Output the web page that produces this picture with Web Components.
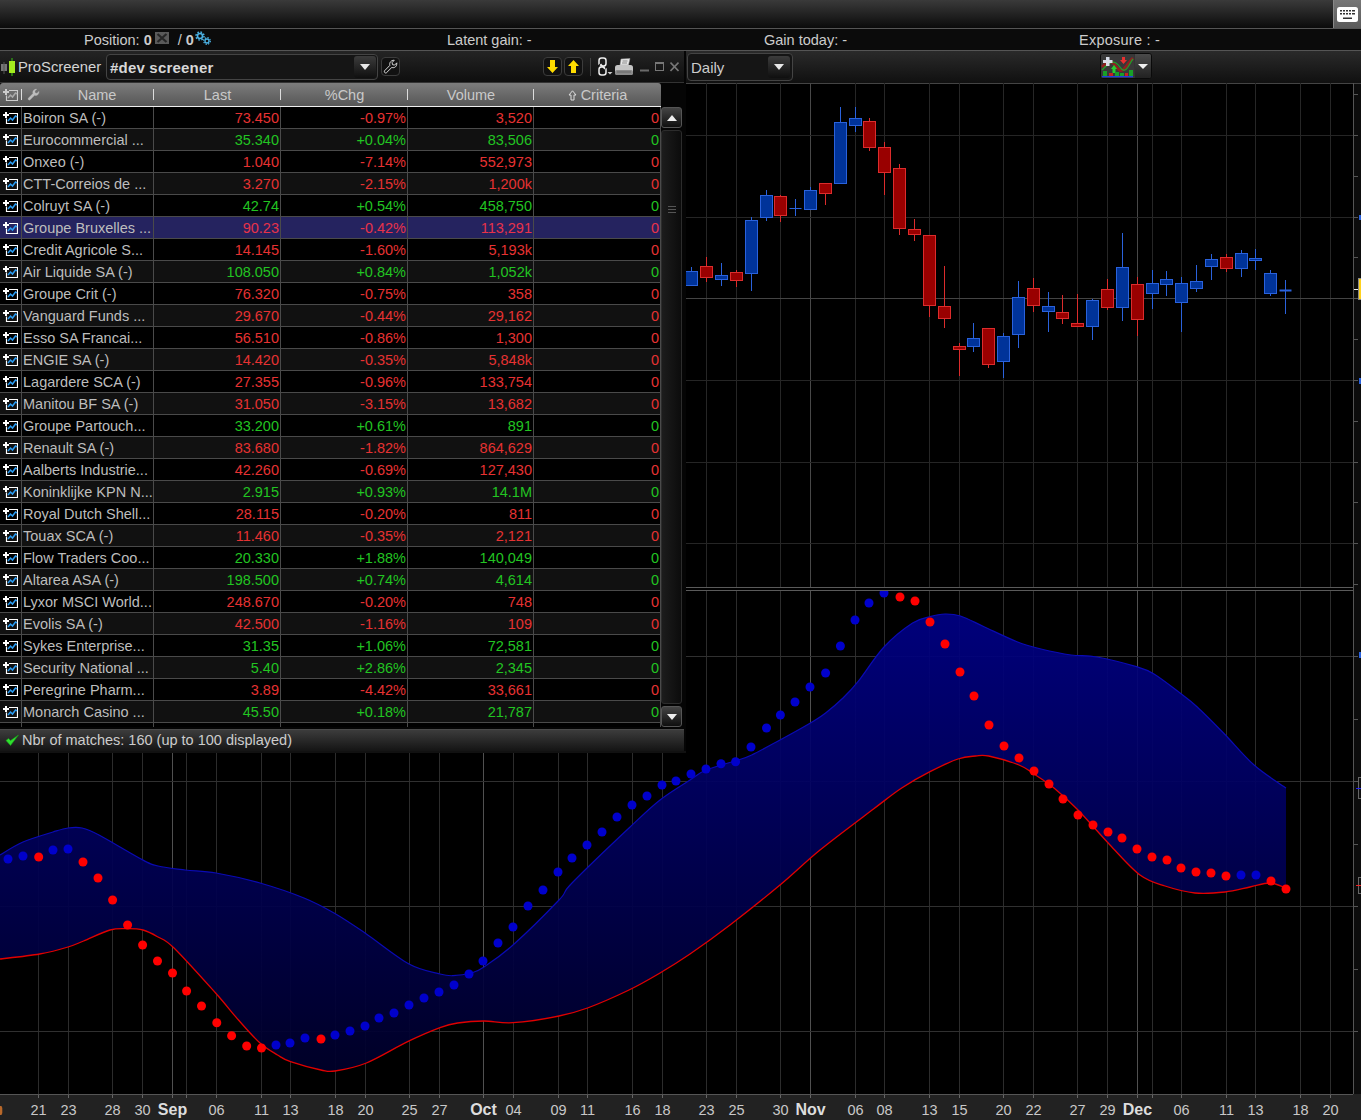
<![CDATA[<!DOCTYPE html>
<html lang="en"><head><meta charset="utf-8"><title>ProScreener</title>
<style>
html,body{margin:0;padding:0;background:#000;width:1361px;height:1120px;overflow:hidden}
body{display:flex;flex-direction:column;position:relative;font:14.5px "Liberation Sans",Arial,sans-serif;color:#ccc}
</style>
<script>
const rowIcon=(b,c)=>`<svg width="15" height="12" viewBox="0 0 15 12" style="display:block"><path d="M3 0v6M0 3h6" stroke="${b}" stroke-width="2" fill="none"/><path d="M6 1.500h8.500v10h-11v-5" stroke="${b}" stroke-width="1.200" fill="none"/><path d="M5 9l2.500-3 2 2 3-4 1.500 1" stroke="${c}" stroke-width="1.500" fill="none"/></svg>`;
const wrench=(s,c,o)=>`<svg width="${s}" height="${s}" viewBox="0 0 16 16" style="display:block"><path d="M1.500 12.700L7.300 6.800C6.500 4 8.500 1.200 12 1.300L9.700 3.800l.4 2.200 2.200.5 2.400-2.400C15 8 12.300 10 9.400 9L3.500 14.800c-1.300.6-2.500-.8-2-2.100z" fill="${o?'none':c}" stroke="${c}" stroke-width="${o?1:.4}" stroke-linejoin="round"/></svg>`;

class PrCaret extends HTMLElement{constructor(){super();this.attachShadow({mode:'open'}).innerHTML=`<style>
:host{display:flex;align-items:center;justify-content:center;width:22px;height:22px;border-radius:3px;background:linear-gradient(#3c3c3c,#0f0f0f);box-sizing:border-box;flex:none}
i{display:block;width:0;height:0;border:5.500px solid transparent;border-top:6px solid #e8e8e8;border-bottom:0}
</style><i></i>`}}
customElements.define('pr-caret',PrCaret);

class PrTopbar extends HTMLElement{constructor(){super();this.attachShadow({mode:'open'}).innerHTML=`<style>
:host{display:flex;justify-content:flex-end;height:28px;flex:none;background:linear-gradient(#3a3a3a,#0b0b0b);border-bottom:1px solid #555}
.k{width:28px;display:flex;align-items:center;justify-content:center;background:linear-gradient(#777,#5a5a5a);border-left:1px solid #888;box-sizing:border-box}
</style><div class="k"><svg width="21" height="15" viewBox="0 0 21 15"><rect width="21" height="15" rx="2.500" fill="#fff"/><g fill="#333"><path d="M3 3h2v1.500H3zM6 3h2v1.500H6zM9 3h2v1.500H9zM12 3h2v1.500h-2zM15 3h3v1.500h-3zM3 6h2v1.500H3zM6 6h2v1.500H6zM9 6h2v1.500H9zM12 6h2v1.500h-2zM15 6h3v1.500h-3zM6 10.500h9V12H6z"/></g></svg></div>`}}
customElements.define('pr-topbar',PrTopbar);

class PrStatus extends HTMLElement{constructor(){super();this.attachShadow({mode:'open'}).innerHTML=`<style>
:host{display:grid;grid-template-columns:447px 317px 315px 1fr;height:21px;flex:none;align-items:start;background:#0b0b0b;border-bottom:1px solid #555;color:#ccc;font-size:14.500px;line-height:23px}
</style><slot></slot>`}}
customElements.define('pr-status',PrStatus);
class PrStat extends HTMLElement{constructor(){super();this.attachShadow({mode:'open'}).innerHTML=`<style>
:host{display:block;height:21px;white-space:nowrap;padding-left:var(--pad,0)}
</style><slot></slot>`}}
customElements.define('pr-stat',PrStat);

class PrToolbar extends HTMLElement{constructor(){super();this.attachShadow({mode:'open'}).innerHTML=`<style>
:host{display:flex;align-items:flex-start;height:30px;padding:2px 0 0 687px;flex:none;background:linear-gradient(#2a2a2a,#101010)}
.sel{display:flex;align-items:center;justify-content:space-between;width:106px;height:28px;box-sizing:border-box;border:1px solid #444;border-radius:4px;background:#151515;padding:0 2px 0 3px;color:#ccc;font-size:15px}
.ind{display:flex;margin-left:307px;height:26px;border-radius:3px;overflow:hidden;background:#333;border:1px solid #0a0a0a;box-sizing:border-box}
.ind svg{display:block}.ar{width:16px;margin-left:1px;display:flex;align-items:center;justify-content:center;background:linear-gradient(#4a4a4a,#222)}
.ar i{width:0;height:0;border:5px solid transparent;border-top:5px solid #eee;border-bottom:0}
</style><div class="sel">Daily<pr-caret></pr-caret></div>
<div class="ind"><svg width="33" height="24" viewBox="0 0 33 24"><rect width="33" height="24" fill="#383838"/>
<path d="M1 13C6 8 10 6 14 11s6 8 10 3 5-7 8-10" stroke="#8e2020" stroke-width="3" fill="none"/>
<path d="M1 16C6 11 10 6 15 9s5 9 9 7 5-8 8-11" stroke="#1f9d2a" stroke-width="1.300" fill="none"/>
<path d="M2 6h3V3h3.500v3h3v3h-3v3H5V9H2z" fill="#d8dde8"/>
<path d="M21 3h3v3h2l-3.500 4L19 6h2z" fill="#e83030"/><path d="M11.500 19v-4H10l3-4 3 4h-1.500v4z" fill="#28d030"/>
<g><rect x="2" y="17" width="4" height="5" fill="#18a028"/><rect x="8" y="19" width="4" height="3" fill="#c82020"/><rect x="14" y="18" width="4" height="4" fill="#18a028"/><rect x="19" y="19" width="4" height="3" fill="#18a028"/><rect x="24" y="19" width="3" height="3" fill="#c82020"/><rect x="28" y="16" width="4" height="6" fill="#18a028"/></g>
<rect x="1" y="22" width="31" height="1.300" fill="#2040e0"/></svg><div class="ar"><i></i></div></div>`}}
customElements.define('pr-toolbar',PrToolbar);

class PrChart extends HTMLElement{constructor(){super();
 const H=1037,o=83,Y=y=>y-o;
 const ticks=[[38,'21'],[68,'23'],[112,'28'],[142,'30'],[172,'Sep',1],[186,''],[216,'06'],[261,'11'],[290,'13'],[335,'18'],[365,'20'],[409,'25'],[439,'27'],[483,'Oct',1],[513,'04'],[558,'09'],[587,'11'],[632,'16'],[662,'18'],[706,'23'],[736,'25'],[780,'30'],[810,'Nov',1],[855,'06'],[884,'08'],[929,'13'],[959,'15'],[1003,'20'],[1033,'22'],[1077,'27'],[1107,'29'],[1137,'Dec',1],[1152,''],[1181,'06'],[1226,'11'],[1255,'13'],[1300,'18'],[1330,'20']];
 const C=[['b',691.5,271,285,267,285],['r',706.5,266,277,257,282],['b',721.5,275,279,263,286],['r',736.5,272,280,270,287],['b',751.5,220,273,217,291],['b',766.5,195,217,190,221],['r',780.5,196,215,195,222],['b',795.5,208,208,199,216],['b',810.5,190,209,187,209],['r',825.5,183,193,183,205],['b',840.5,122,183,107,183],['b',855.5,118,125,107,132],['r',869.5,121,147,118,151],['r',884.5,147,172,142,195],['r',899.5,168,228,164,235],['r',914.5,229,234,219,241],['r',929.5,235,305,235,317],['r',944.5,306,318,266,328],['r',959.5,346,349,343,376],['b',973.5,338,346,323,352],['r',988.5,328,364,328,368],['b',1003.5,336,361,333,378],['b',1018.5,297,334,281,348],['r',1033.5,288,305,278,312],['b',1048.5,306,311,292,332],['r',1062.5,312,318,295,324],['r',1077.5,323,326,294,327],['b',1092.5,300,326,299,340],['r',1107.5,289,307,279,310],['b',1122.5,267,307,233,321],['r',1137.5,284,319,277,336],['b',1152.5,283,293,270,309],['b',1166.5,279,284,271,296],['b',1181.5,283,302,277,332],['b',1196.5,281,288,265,292],['b',1211.5,259,266,254,280],['r',1226.5,257,268,254,272],['b',1241.5,253,268,250,277],['b',1255.5,258,260,249,270],['b',1270.5,273,293,270,296],['b',1285.5,290,290,280,314]];
 const up=[[0,855],[23,842],[53,832],[68,828],[82,828],[99,835],[141,859],[158,866],[185,870],[216,873],[260,883],[304,898],[334,913],[365,933],[409,964],[440,974],[453,975.7],[471,973],[484,967],[513,945],[559,900],[572,883],[629,828],[660,800],[690,780],[706,770],[735.6,760.7],[751.7,755],[780,740],[810.4,723],[825.6,713],[843,698],[858,681.700],[884,647],[912.600,623],[930,616.7],[945,614],[960.4,616],[984,626.7],[1017,641.7],[1041,649],[1071,655],[1097,657],[1136.5,666.7],[1154,674],[1180,693],[1197,706.7],[1223.5,733],[1254,765],[1286,788]];
 const lo=[[0,959],[39.6,954],[68,947],[83.6,941],[110,930],[127.6,928.7],[143,930],[157.5,936.7],[174,948],[215.6,993],[238.5,1020],[260,1043],[277.5,1055],[290.5,1061.7],[321,1070],[335,1071],[366.4,1063],[407.6,1041.7],[440,1027.7],[457.6,1023],[484,1021],[513,1022.7],[559,1016],[587.5,1008],[629,990],[660,973],[690,954],[730,925],[780,885],[820,850],[873.5,809],[901.7,788],[930,771.7],[958,759],[975.6,756],[988.7,756],[1019,765],[1034,774],[1054,788],[1078,810],[1110,845],[1140,875],[1165,886],[1195,893],[1225,892],[1250,887],[1270,883],[1286,888]];
 const db=[[8,859],[23,856],[53,850],[68,849],[276,1045],[290,1043],[305,1038],[335,1035],[350,1031],[365,1026],[379,1018],[394,1013],[409,1005],[424,998],[439,992],[454,985],[469,974],[483,961],[498,943],[513,927],[528,906],[543,890],[558,872],[572,858],[587,845],[602,832],[617,817],[632,805],[647,796],[662,785],[676,781],[691,774],[706,769],[721,763.7],[735.6,761.7],[751,747],[766.5,728],[780.4,715],[795,702],[810,687],[825.6,673],[840.4,646],[855,620],[869,603],[884,593],[1241,875],[1256,875]];
 const dr=[[38.7,857],[83,862],[98,878],[112.6,900],[127.6,925],[142.6,945],[157.5,961],[172.5,973],[186.6,991],[201.500,1006],[216.8,1022.7],[231.6,1035.7],[246.7,1046],[261.5,1048],[321,1039],[900,597],[915,601],[930,622],[945,644],[960,672],[974,696],[989,725],[1004,746],[1019,758],[1034,771],[1049,784],[1063,799],[1078,815],[1093,825],[1108,832],[1122,838],[1137,849],[1152,857],[1167,860],[1181,868],[1196,872],[1211,873],[1226,876],[1271,881],[1286,889]];
 const smooth=(p,start=true)=>{let d=(start?'M':'L')+p[0][0]+' '+Y(p[0][1]);for(let i=0;i<p.length-1;i++){const a=p[i-1]||p[i],b=p[i],c=p[i+1],e=p[i+2]||c;d+=`C${(b[0]+(c[0]-a[0])/6).toFixed(1)} ${(Y(b[1])+(c[1]-a[1])/6).toFixed(1)} ${(c[0]-(e[0]-b[0])/6).toFixed(1)} ${(Y(c[1])-(e[1]-b[1])/6).toFixed(1)} ${c[0]} ${Y(c[1])}`}return d};
 let g='';
 for(const [x,,m] of ticks){const c=m?'#484848':'#262626',c2=m?'#505050':'#2c2c2c';
  g+=`<path d="M${x+.5} 0V${Y(587)}" stroke="${c}"/><path d="M${x+.5} ${Y(591)}V${Y(1094)}" stroke="${c2}"/>`}
 for(const y of [135,217,298,380,462,543])g+=`<path d="M0 ${y+.5-o}H1353" stroke="${y==298?'#444':'#252525'}"/>`;
 for(const y of [656,781,906,1031])g+=`<path d="M0 ${y+.5-o}H1353" stroke="#303030"/>`;
 let cs='';
 for(const [k,x,t,b,w1,w2] of C){const s=k=='b'?'#2a62dc':'#dc2c2c',f=k=='b'?'#003399':'#990000';
  cs+=`<path d="M${x} ${Y(w1)}V${Y(w2)}" stroke="${s}"/>`;
  cs+=t==b?`<path d="M${x-6} ${Y(t)+.5}h12" stroke="${s}" stroke-width="${x>1280?2:1}"/>`:`<rect x="${x-6}" y="${Y(t)+.5}" width="12" height="${b-t}" fill="${f}" stroke="${s}"/>`}
 let ax='';
 for(const y of [94,135,176,217,257,298,339,380,421,462,502,543,584,656,719,781,844,906,969,1031])ax+=`<path d="M1354 ${y+.5-o}h4" stroke="#555"/>`;
 ax+=`<path d="M1360 ${215-o}v5M1360 ${378-o}v6M1360 ${652-o}v6" stroke="#2a62dc" stroke-width="2"/>`;
 ax+=`<rect x="1358.500" y="${278.5-o}" width="4" height="21" fill="#ffd21e" stroke="#888"/><path d="M1354 ${289.5-o}h4" stroke="#eee"/>`;
 ax+=`<rect x="1358.500" y="${777.5-o}" width="4" height="21" fill="#111" stroke="#666"/><path d="M1356 ${788.5-o}h5" stroke="#22e"/>`;
 ax+=`<rect x="1358.500" y="${877.5-o}" width="4" height="16" fill="#111" stroke="#666"/><path d="M1356 ${885.5-o}h5" stroke="#e22"/>`;
 let tx='';
 for(const [x,l,m] of ticks)if(l)tx+=`<text x="${x+.5}" y="${1115-o}" text-anchor="middle" font-size="${m?16:14.5}" font-weight="${m?700:400}" fill="${m?'#ddd':'#c8c8c8'}">${l}</text>`;
 const lower=[...lo].reverse();
 const band=smooth(up)+`L1286 ${Y(888)}`+smooth(lower,false)+'Z';
 const dots=(a,c)=>a.map(([x,y])=>`<circle cx="${x}" cy="${Y(y)}" r="4.500" fill="${c}"/>`).join('');
 this.attachShadow({mode:'open'}).innerHTML=`<style>:host{display:block;height:${H}px;flex:none;background:#000}svg{display:block;font-family:"Liberation Sans",Arial,sans-serif}</style>
 <svg width="1361" height="${H}" viewBox="0 0 1361 ${H}">
 <defs><clipPath id="lp"><rect x="0" y="${Y(591)}" width="1353" height="503"/></clipPath>
 <linearGradient id="bg" gradientUnits="userSpaceOnUse" x1="0" x2="0" y1="${Y(614)}" y2="${Y(1070)}"><stop offset="0" stop-color="#000084"/><stop offset="1" stop-color="#00002a"/></linearGradient></defs>
 <path d="M1354 0H1361V${Y(1094)}H1354z" fill="#0c0c0c"/>
 <rect x="0" y="0" width="1361" height="1" fill="#444"/>
 ${g}
 ${cs}
 <path d="M0 ${Y(587)+.5}H1353M0 ${Y(590)+.5}H1353" stroke="#5a5a5a"/>
 <path d="M1353.500 0V${Y(1094)}" stroke="#555"/>
 ${ax}
 <g clip-path="url(#lp)"><path d="${band}" fill="url(#bg)" fill-opacity=".93"/>
 <path d="${smooth(up)}" fill="none" stroke="#0a0ab4" stroke-width="1.200"/>
 <path d="${smooth(lo)}" fill="none" stroke="#e00000" stroke-width="1.300"/>
 ${dots(db,'#0000cc')}${dots(dr,'#ff0000')}</g>
 <rect x="0" y="${Y(1094)}" width="1361" height="26" fill="#222"/>
 <path d="M0 ${Y(1094)+.5}H1353" stroke="#555"/>
 ${ticks.map(([x])=>`<path d="M${x+.5} ${Y(1095)}v3" stroke="#666"/>`).join('')}
 <path d="M0 ${1106-o}h1.500l.8 2v5l-.8 2H0z" fill="#b8682a"/>
 ${tx}
 </svg>`}}
customElements.define('pr-chart',PrChart);

const COLS='22px 132px 127px 127px 126px 127px';
class ScRow extends HTMLElement{constructor(){super();this.attachShadow({mode:'open'})}
 connectedCallback(){const d=this.dataset;this.shadowRoot.innerHTML=`<style>
 :host{display:grid;grid-template-columns:${COLS};height:22px;box-sizing:border-box;border-bottom:1px solid #4a4a4a;background:${d.sel?'#25235f':d.alt?'#111':'#000'};font-size:14.500px;line-height:23px;color:${d.t=='g'?'#22c422':(d.sel?'#e8324a':'#e63232')};white-space:nowrap}
 div{border-right:1px solid #4a4a4a;text-align:right;padding-right:1px;overflow:hidden;height:21px}
 .i{padding:5px 0 0 3px;box-sizing:border-box;text-align:left}
 .n{text-align:left;padding-left:1px;color:#bdbdbd}
 </style><div class="i">${rowIcon('#fff','#2a9df4')}</div><div class="n">${d.n}</div><div>${d.l}</div><div>${d.c}</div><div>${d.v}</div><div>0</div>`}}
customElements.define('sc-row',ScRow);

class ScHeader extends HTMLElement{constructor(){super();this.attachShadow({mode:'open'}).innerHTML=`<style>
 :host{display:grid;grid-template-columns:${COLS};height:24px;box-sizing:border-box;border-bottom:1px solid #eee;background:linear-gradient(#7c7c7c,#565656);border-radius:3px 3px 0 0;color:#c9c9c9;font-size:14.500px;line-height:24px;text-align:center}
 div{position:relative;display:flex;align-items:center;justify-content:center;gap:4px}
 div::after{content:"";position:absolute;right:0;top:6px;height:11px;border-right:1px solid #ddd}
 div:last-child::after{display:none}
 .i{padding:0 0 0 3px;justify-content:flex-start}
 .n{padding-left:18px;box-sizing:border-box}
 .w{position:absolute;left:5px;top:5px}
 </style><div class="i">${rowIcon('#ccc','#aaa')}</div><div class="n"><span class="w">${wrench(13,'#bdbdbd')}</span>Name</div><div>Last</div><div>%Chg</div><div>Volume</div><div><svg width="9" height="11" viewBox="0 0 9 11"><path d="M4.500 .8L8 5H6v5H3V5H1z" fill="none" stroke="#ddd"/></svg>Criteria</div>`}}
customElements.define('sc-header',ScHeader);

class ScScroll extends HTMLElement{constructor(){super();this.attachShadow({mode:'open'}).innerHTML=`<style>
 :host{display:flex;flex-direction:column;width:21px;margin:24px 2px 0 0;height:620px;flex:none;gap:2px}
 .b{height:21px;box-sizing:border-box;border:1px solid #555;border-radius:3px;background:linear-gradient(#444,#0f0f0f);display:flex;align-items:center;justify-content:center;flex:none}
 .u{border-left:5.500px solid transparent;border-right:5.500px solid transparent;border-bottom:6px solid #eee}
 .d{border-left:5px solid transparent;border-right:5px solid transparent;border-top:6px solid #eee}
 .t{flex:1;box-sizing:border-box;border:1px solid #2c2c2c;border-radius:3px;background:linear-gradient(90deg,#1c1c1c,#0c0c0c);padding-top:75px;display:flex;justify-content:center}
 .g{width:8px;height:5px;border-top:1px solid #555;border-bottom:1px solid #555;position:relative}
 .g::after{content:"";position:absolute;left:0;right:0;top:2px;border-top:1px solid #555}
 </style><div class="b"><i class="u"></i></div><div class="t"><div class="g"></div></div><div class="b"><i class="d"></i></div>`}}
customElements.define('sc-scroll',ScScroll);

class ScBtn extends HTMLElement{constructor(){super();this.attachShadow({mode:'open'}).innerHTML=`<style>
 :host{display:flex;align-items:center;justify-content:center;width:19px;height:19px;box-sizing:border-box;border:1px solid #3c3c3c;border-radius:4px;background:#111;flex:none}
 </style><slot></slot>`}}
customElements.define('sc-btn',ScBtn);

class PrScreener extends HTMLElement{constructor(){super();
 const D=`Boiron SA (-)|73.450|-0.97%|3,520|r
Eurocommercial ...|35.340|+0.04%|83,506|g
Onxeo (-)|1.040|-7.14%|552,973|r
CTT-Correios de ...|3.270|-2.15%|1,200k|r
Colruyt SA (-)|42.74|+0.54%|458,750|g
Groupe Bruxelles ...|90.23|-0.42%|113,291|r
Credit Agricole S...|14.145|-1.60%|5,193k|r
Air Liquide SA (-)|108.050|+0.84%|1,052k|g
Groupe Crit (-)|76.320|-0.75%|358|r
Vanguard Funds ...|29.670|-0.44%|29,162|r
Esso SA Francai...|56.510|-0.86%|1,300|r
ENGIE SA (-)|14.420|-0.35%|5,848k|r
Lagardere SCA (-)|27.355|-0.96%|133,754|r
Manitou BF SA (-)|31.050|-3.15%|13,682|r
Groupe Partouch...|33.200|+0.61%|891|g
Renault SA (-)|83.680|-1.82%|864,629|r
Aalberts Industrie...|42.260|-0.69%|127,430|r
Koninklijke KPN N...|2.915|+0.93%|14.1M|g
Royal Dutch Shell...|28.115|-0.20%|811|r
Touax SCA (-)|11.460|-0.35%|2,121|r
Flow Traders Coo...|20.330|+1.88%|140,049|g
Altarea ASA (-)|198.500|+0.74%|4,614|g
Lyxor MSCI World...|248.670|-0.20%|748|r
Evolis SA (-)|42.500|-1.16%|109|r
Sykes Enterprise...|31.35|+1.06%|72,581|g
Security National ...|5.40|+2.86%|2,345|g
Peregrine Pharm...|3.89|-4.42%|33,661|r
Monarch Casino ...|45.50|+0.18%|21,787|g`.split('\n').map(s=>s.split('|'));
 const rows=D.map((r,i)=>`<sc-row data-n="${r[0]}" data-l="${r[1]}" data-c="${r[2]}" data-v="${r[3]}" data-t="${r[4]}"${i&1?' data-alt="1"':''}${i==5?' data-sel="1"':''}></sc-row>`).join('');
 this.attachShadow({mode:'open'}).innerHTML=`<style>
 :host{position:absolute;left:0;top:51px;width:686px;height:702px;padding-right:2px;display:flex;flex-direction:column;background:#050505;color:#ccc;font-size:14.500px;box-sizing:border-box;border-bottom:2px solid #111}
 .title{display:flex;align-items:center;height:31px;flex:none;background:linear-gradient(#242424,#0e0e0e);border-bottom:1px solid #333}
 .logo{margin-left:1px;flex:none;display:block}
 .name{margin-left:1px;width:88px;flex:none;font-size:14.800px;line-height:17px;padding-top:2px;color:#d4d4d4;white-space:nowrap}
 .sel{display:flex;align-items:center;justify-content:space-between;width:272px;height:26px;box-sizing:border-box;border:1px solid #444;border-radius:4px;background:#151515;padding:0 1px 0 3px;font:700 15px "Liberation Sans",Arial,sans-serif;letter-spacing:.2px;color:#d8d8d8;flex:none}
 .sel span{padding-top:2px}
 .mt{margin-left:3px}
 .up{margin-left:143px}.up2{margin-left:2px}
 .sep{width:1px;height:18px;background:#444;margin-left:7px;flex:none}
 svg{display:block;flex:none}
 .main{display:flex;flex:1;min-height:0}
 .grid{width:661px;flex:none;height:644px;overflow:hidden;display:flex;flex-direction:column}
 .stub{display:grid;grid-template-columns:${COLS};height:4px;flex:none;background:#000}
 .stub i{border-right:1px solid #4a4a4a}
 .rows{background:#000}
 .foot{display:flex;align-items:center;gap:3px;height:22px;flex:none;padding:0 0 2px 5px;margin-top:1px;background:linear-gradient(#3c3c3c,#141414);border-top:1px solid #4a4a4a;box-sizing:border-box;color:#ccc;white-space:nowrap}
 </style>
 <div class="title">
  <svg class="logo" width="16" height="18" viewBox="0 0 16 18"><rect x="0" y="6" width="6" height="7" fill="#777"/><path d="M3 4v12" stroke="#555"/><path d="M11 0v18" stroke="#2f8f16" stroke-width="1.500"/><rect x="8" y="3" width="6" height="12" fill="#a4ec20"/></svg>
  <span class="name">ProScreener</span>
  <div class="sel"><span>#dev screener</span><pr-caret></pr-caret></div>
  <sc-btn class="mt">${wrench(15,'#e4e4e4',1)}</sc-btn>
  <sc-btn class="up"><svg width="11" height="13" viewBox="0 0 11 13"><path d="M3 0h5v7h3l-5.500 6L0 7h3z" fill="#ffdc00"/></svg></sc-btn>
  <sc-btn class="up2"><svg width="11" height="13" viewBox="0 0 11 13"><path d="M5.500 0L11 6H8v7H3V6H0z" fill="#ffdc00"/></svg></sc-btn>
  <i class="sep"></i>
  <svg style="margin-left:6px" width="16" height="19" viewBox="0 0 16 19"><g fill="none" stroke="#eee" stroke-width="1.500"><rect x="2" y="1" width="7" height="8" rx="2.500"/><rect x="2" y="10" width="7" height="8" rx="2.500"/></g><path d="M1 9.500L4 6.500M7 12.500L10 9.500" stroke="#111" stroke-width="1.500"/><path d="M3.500 7L8 12" stroke="#eee" stroke-width="1.500"/><path d="M10.500 15h5l-2.500 2.500z" fill="#ccc"/></svg>
  <svg style="margin-left:2px" width="18" height="18" viewBox="0 0 18 18"><path d="M6 1l9-.5L13.500 7H5z" fill="#e8e8e8" stroke="#999" stroke-width=".5"/><path d="M7.500 3h5M7 5h5" stroke="#888"/><rect x="0" y="7" width="18" height="10" rx="2.500" fill="#c4c4c4"/><rect x="0" y="12" width="18" height="5" rx="2" fill="#8a8a8a"/><path d="M2 14h14" stroke="#666"/></svg>
  <svg style="margin-left:7px" width="9" height="11" viewBox="0 0 9 11"><path d="M0 9.500h9" stroke="#6a6a6a" stroke-width="2"/></svg>
  <svg style="margin-left:6px" width="9" height="11" viewBox="0 0 9 11"><rect x=".5" y="1.500" width="8" height="8" fill="none" stroke="#777"/><path d="M0 2h9" stroke="#777" stroke-width="2"/></svg>
  <svg style="margin-left:6px" width="9" height="11" viewBox="0 0 9 11"><path d="M.5 1.500l8 8.500M8.500 1.500l-8 8.500" stroke="#777" stroke-width="1.600"/></svg>
 </div>
 <div class="main">
  <div class="grid"><sc-header></sc-header><div class="rows">${rows}</div><div class="stub"><i></i><i></i><i></i><i></i><i></i><i></i></div></div>
  <sc-scroll></sc-scroll>
 </div>
 <div class="foot"><svg width="14" height="12" viewBox="0 0 14 12"><path d="M1 6.500l4.500 5L13.500 1 5.500 6.500 3.500 4.500z" fill="#2fe02f" stroke="#1a9c1a" stroke-width=".6"/></svg>Nbr of matches: 160 (up to 100 displayed)</div>`}}
customElements.define('pr-screener',PrScreener);
</script></head><body><pr-topbar></pr-topbar><pr-status><pr-stat style="--pad:84px">Position: <b>0</b><svg width="14" height="12" viewBox="0 0 14 12" style="margin:0 5px 0 3px;vertical-align:1px"><rect width="14" height="12" fill="#5a5a5a"/><path d="M2.500 2l9 8M11.500 2l-9 8" stroke="#262626" stroke-width="2.200"/></svg> / <b>0</b><svg width="16" height="14" viewBox="0 0 16 14" style="margin-left:1px;vertical-align:0"><g fill="none" stroke="#4cb2e4"><circle cx="5" cy="5" r="2.500" stroke-width="1.600"/><circle cx="5" cy="5" r="4" stroke-width="1.500" stroke-dasharray="1.600 1.540"/><circle cx="12" cy="10" r="2" stroke-width="1.300"/><circle cx="12" cy="10" r="3.300" stroke-width="1.300" stroke-dasharray="1.400 1.190"/></g></svg></pr-stat><pr-stat>Latent gain: -</pr-stat><pr-stat>Gain today: -</pr-stat><pr-stat style="letter-spacing:.25px">Exposure : -</pr-stat></pr-status><pr-toolbar></pr-toolbar><pr-chart></pr-chart><pr-screener></pr-screener></body></html>]]>
